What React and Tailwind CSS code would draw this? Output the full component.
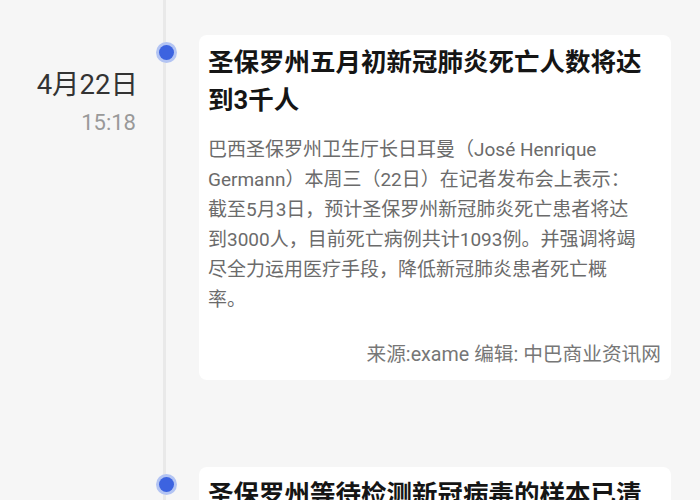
import React from 'react';

const news = [
  {
    date: '4月22日',
    time: '15:18',
    title: '圣保罗州五月初新冠肺炎死亡人数将达到3千人',
    body: '巴西圣保罗州卫生厅长日耳曼（José Henrique Germann）本周三（22日）在记者发布会上表示：截至5月3日，预计圣保罗州新冠肺炎死亡患者将达到3000人，目前死亡病例共计1093例。并强调将竭尽全力运用医疗手段，降低新冠肺炎患者死亡概率。',
    source: '来源:exame 编辑: 中巴商业资讯网'
  },
  {
    date: '4月22日',
    time: '14:02',
    title: '圣保罗州等待检测新冠病毒的样本已清空',
    body: '圣保罗州政府表示，州内积压的新冠病毒检测样本已全部完成检测。',
    source: '来源:exame 编辑: 中巴商业资讯网'
  }
];

const TimelineItem = ({ item }) => {
  return (
    <div className="flex">
      <div className="w-[140px] shrink-0 pt-[67px] pr-[2px] text-right">
        <div className="text-[27.5px] leading-[36px] text-[#333]">{item.date}</div>
        <div className="mt-[5px] pr-[2px] text-[22px] leading-[30px] text-[#999]">{item.time}</div>
      </div>

      <div className="relative w-[59px] shrink-0">
        <div className="ml-[23px] h-full w-[3px] bg-[#e9e9e9]"></div>
        <div className="absolute left-[16px] top-[42px] flex h-[21px] w-[21px] items-center justify-center rounded-full bg-[#b3c4f3]">
          <div className="h-[15px] w-[15px] rounded-full bg-[#3c63e0]"></div>
        </div>
      </div>

      <div className="w-[472px] shrink-0 pt-[35px] pb-[52px]">
        <div className="rounded-lg bg-white pt-[8px] pr-[10px] pb-[10px] pl-[9px]">
          <h3 className="text-[25.5px] font-bold leading-[38px] text-[#151515]">{item.title}</h3>
          <p className="mt-[16px] mr-[22px] text-[19px] leading-[30px] text-[#6b6b6b]">{item.body}</p>
          <div className="mt-[25px] text-right text-[19.7px] leading-[30px] text-[#777]">{item.source}</div>
        </div>
      </div>
    </div>
  );
};

export default function App() {
  return (
    <div className="min-h-screen bg-[#f6f6f6] font-['Roboto','Noto_Sans_CJK_SC',sans-serif]">
      {news.map((item, i) => (
        <TimelineItem key={i} item={item} />
      ))}
    </div>
  );
}
